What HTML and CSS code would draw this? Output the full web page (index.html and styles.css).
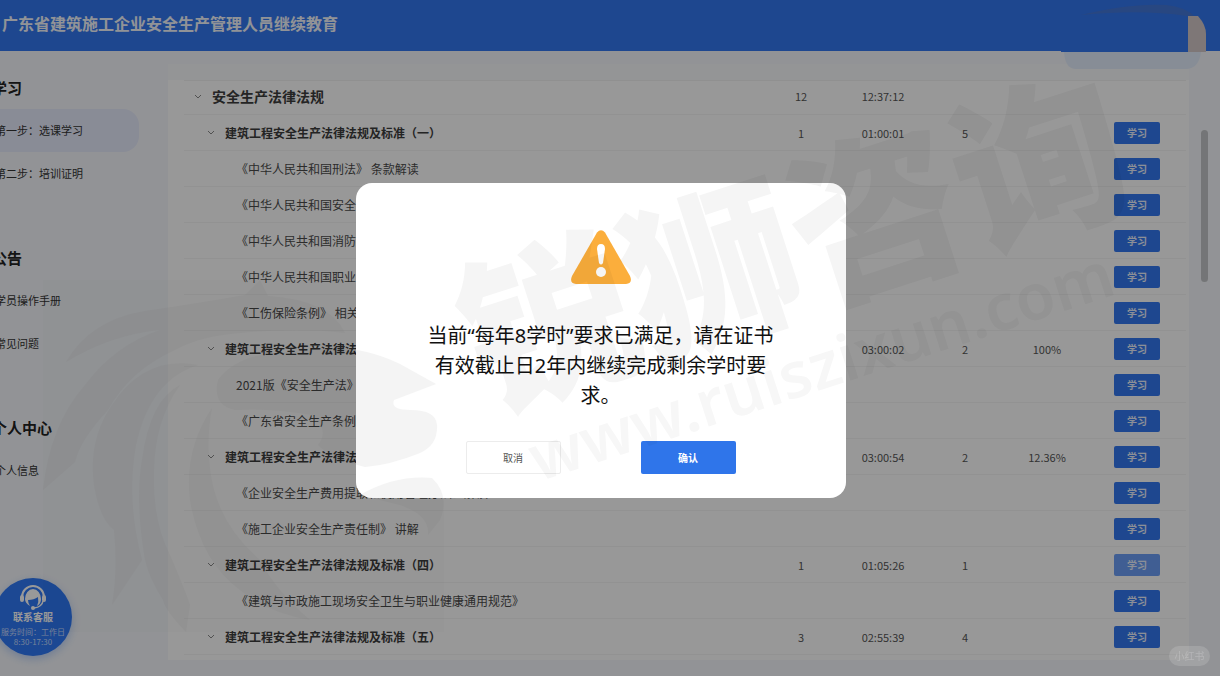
FILE: index.html
```html
<!DOCTYPE html>
<html lang="zh-CN">
<head>
    <meta charset="UTF-8">
    <meta name="viewport" content="width=device-width, initial-scale=1.0">
    <title>广东省建筑施工企业安全生产管理人员继续教育</title>
    <link rel="stylesheet" href="styles.css">
</head>
<body>
    <header class="header">
        <h1>广东省建筑施工企业安全生产管理人员继续教育</h1>
        <svg class="user-box" width="146" height="70" viewBox="0 0 146 70" aria-hidden="true">
            <path d="M20 15 Q70 3 105 5 Q125 7 134 17 L126 16 Q80 9 20 15z" fill="#5f78b5" opacity=".4"/>
            <rect x="0" y="16" width="127" height="36" fill="#3377ee"/>
            <path d="M127 16h10q8 9 8 18v18h-18z" fill="#d2c6c6"/>
            <path d="M3 52h137q-2 16-14 17H14Q4 68 3 52z" fill="#e2ebfb"/>
        </svg>
    </header>

    <div class="layout">
        <nav class="sidebar">
            <section>
                <h2>学习</h2>
                <a href="#" class="active">第一步：选课学习</a>
                <a href="#">第二步：培训证明</a>
            </section>
            <section>
                <h2>公告</h2>
                <a href="#">学员操作手册</a>
                <a href="#">常见问题</a>
            </section>
            <section>
                <h2>个人中心</h2>
                <a href="#">个人信息</a>
            </section>
        </nav>

        <main class="content">
            <table class="courses">
                <colgroup>
                    <col>
                    <col class="col-num">
                    <col class="col-num">
                    <col class="col-num">
                    <col class="col-num">
                    <col class="col-action">
                </colgroup>
                <tbody id="course-rows"></tbody>
            </table>
        </main>
        <div class="scrollbar"></div>
    </div>

    <a href="#" class="service">
        <svg width="28" height="26" viewBox="0 0 28 26" aria-hidden="true">
            <path d="M3 13a11 11 0 0 1 22 0" fill="none" stroke="#fff" stroke-width="2"/>
            <rect x="1" y="11" width="4" height="7" rx="2" fill="#fff"/>
            <rect x="23" y="11" width="4" height="7" rx="2" fill="#fff"/>
            <path d="M6 15a8 10 0 0 1 16 0q0 5-4 7 2-4 1-9-4 3-10 3 0 3 2 6-5-3-5-7z" fill="#fff"/>
            <path d="M24 17q-1 6-9 7" fill="none" stroke="#fff" stroke-width="1.5"/>
            <circle cx="14" cy="24" r="2" fill="#fff"/>
        </svg>
        <strong>联系客服</strong>
        <span>服务时间：工作日</span>
        <span>8:30-17:30</span>
    </a>

    <div class="overlay">
        <div class="dialog" role="alertdialog" aria-modal="true" aria-describedby="dialog-text">
            <svg class="warn-icon" width="60" height="54" viewBox="0 0 60 54" aria-hidden="true">
                <path d="M26 2.500Q30-2 34 2.500L59 46Q62 53 55 54H5Q-2 53 1 46z" fill="#fbae3c"/>
                <path d="M26 19q0-5 4-5t4 5l-2 14q-2 3-4 0z" fill="#fff"/>
                <circle cx="30" cy="42" r="5" fill="#fff"/>
            </svg>
            <p id="dialog-text">当前“每年8学时”要求已满足，请在证书有效截止日2年内继续完成剩余学时要求。</p>
            <div class="dialog-actions">
                <button type="button" class="btn-cancel">取消</button>
                <button type="button" class="btn-confirm">确认</button>
            </div>
        </div>
    </div>

    <svg class="watermark" viewBox="0 0 1220 676" preserveAspectRatio="xMidYMid slice" aria-hidden="true">
        <!-- lion head and mane -->
        <g class="mark mark-lion">
            <path d="M66 362Q90 320 145 311Q200 303 245 295L260 280L268 296Q330 300 345 333Q300 327 240 333Q200 336 175 350Q130 370 108 410Q80 440 75 462L43 490Q50 425 85 385Q115 345 160 330Q110 335 66 362z"/>
            <path d="M198 365Q150 380 136 445Q126 500 142 560L112 605Q118 570 114 530Q100 520 94 485Q88 440 112 405Q145 355 198 365z"/>
            <path d="M180 385Q155 420 154 470Q152 520 170 555Q185 590 190 605L186 632Q165 610 163 600Q150 580 145 560Q135 500 142 460Q150 400 180 385z"/>
            <path d="M218 380Q240 350 300 352Q350 340 400 364L436 384L394 400Q390 410 410 410Q436 410 437 425Q438 445 420 453Q390 465 365 467Q330 458 318 445Q330 430 312 415Q270 408 235 410Q212 405 218 380z"/>
            <path d="M360 495Q395 475 432 478Q450 495 440 520L428 535Q430 515 400 505Q380 500 360 495z"/>
            <path d="M212 408Q184 450 190 500Q200 560 240 590Q265 612 310 620Q275 590 260 560Q225 530 214 490Q204 450 212 408z"/>
        </g>
        <text class="mark mark-name" transform="translate(486 410) rotate(-18)">锐狮咨询</text>
        <text class="mark mark-url" transform="translate(538 482) rotate(-18)">www.ruiszixun.com</text>
    </svg>
    <div class="source-tag">小红书</div>

    <script>
        // level, name, courses, duration, hours, progress
        const courses = [
            [1, '安全生产法律法规', '12', '12:37:12', '', ''],
            [2, '建筑工程安全生产法律法规及标准（一）', '1', '01:00:01', '5', ''],
            [3, '《中华人民共和国刑法》 条款解读', '', '', '', ''],
            [3, '《中华人民共和国安全生产法》 条款解读', '', '', '', ''],
            [3, '《中华人民共和国消防法》 条款解读', '', '', '', ''],
            [3, '《中华人民共和国职业病防治法》 条款解读', '', '', '', ''],
            [3, '《工伤保险条例》 相关条款解读', '', '', '', ''],
            [2, '建筑工程安全生产法律法规及标准（二）', '2', '03:00:02', '2', '100%'],
            [3, '2021版《安全生产法》 解读', '', '', '', ''],
            [3, '《广东省安全生产条例》 解读', '', '', '', ''],
            [2, '建筑工程安全生产法律法规及标准（三）', '2', '03:00:54', '2', '12.36%'],
            [3, '《企业安全生产费用提取和使用管理办法》解读', '', '', '', ''],
            [3, '《施工企业安全生产责任制》 讲解', '', '', '', ''],
            [2, '建筑工程安全生产法律法规及标准（四）', '1', '01:05:26', '1', ''],
            [3, '《建筑与市政施工现场安全卫生与职业健康通用规范》', '', '', '', ''],
            [2, '建筑工程安全生产法律法规及标准（五）', '3', '02:55:39', '4', '']
        ];

        const chevron = `
            <button type="button" class="toggle" aria-label="收起" aria-expanded="true">
                <svg width="8" height="5" viewBox="0 0 8 5"><path d="M1 1l3 3 3-3" fill="none" stroke="#888"/></svg>
            </button>`;

        document.getElementById('course-rows').innerHTML = courses.map(([level, name, ...cells], i) => {
            const light = i === 13 ? ' light' : '';
            return `
                <tr class="level-${level}">
                    <td><div class="name">${level < 3 ? chevron : ''}${name}</div></td>
                    ${cells.map(cell => `<td class="num">${cell}</td>`).join('')}
                    <td class="num">${level > 1 ? `<button type="button" class="btn-study${light}">学习</button>` : ''}</td>
                </tr>`;
        }).join('');
    </script>
</body>
</html>
```
FILE: styles.css
```css
* {
    box-sizing: border-box;
}

body {
    font-family: "Noto Sans CJK SC", sans-serif;
    margin: 0;
    height: 100vh;
    display: flex;
    flex-direction: column;
    overflow: hidden;
    background-color: #f4f6fa;
    color: #333;
}

button {
    font-family: inherit;
    padding: 0;
    border: none;
    cursor: pointer;
}

a {
    color: inherit;
    text-decoration: none;
}

.header {
    position: relative;
    flex: none;
    height: 51px;
    padding-left: 2px;
    background-color: #3377ee;
}

.header h1 {
    margin: 0;
    font-size: 16px;
    line-height: 46px;
    color: #f2f5fc;
}

.user-box {
    position: absolute;
    top: 0;
    right: 13px;
}

.layout {
    flex: 1;
    min-height: 0;
    display: flex;
}

/* Sidebar */
.sidebar {
    flex: none;
    width: 147px;
    margin-left: -8px;
    padding-top: 15px;
}

.sidebar section {
    padding-bottom: 41px;
}

.sidebar h2 {
    margin: 0;
    font-size: 15px;
    line-height: 43px;
    color: #222;
}

.sidebar a {
    display: block;
    padding-left: 3px;
    font-size: 11px;
    line-height: 43px;
}

.sidebar a.active {
    background-color: #e5e9fa;
    border-radius: 0 16px 16px 0;
}

/* Course list */
.content {
    flex: 1;
    margin: 13px 12px 16px 29px;
    padding: 16px 3px 0 16px;
    overflow: hidden;
    background: linear-gradient(#f7f8fb 16px, #fefefe 16px);
}

.courses {
    width: 100%;
    table-layout: fixed;
    border-collapse: separate;
    border-spacing: 0;
}

.col-num {
    width: 82px;
}

.col-action {
    width: 98px;
}

.courses td {
    height: 36px;
    padding: 0;
    border-bottom: 1px solid #f4f4f4;
    font-size: 12px;
    color: #4a4a4a;
}

.courses .level-1 td {
    height: 35px;
    padding-bottom: 3px;
    border-top: 1px solid #f0f0f0;
}

.courses .num {
    text-align: center;
    font-size: 11px;
    color: #555;
}

.name {
    display: flex;
    align-items: center;
    white-space: nowrap;
}

.level-1 .name {
    padding-left: 8px;
    font-size: 14px;
    line-height: 20px;
    font-weight: bold;
    color: #3c3c3c;
}

.level-2 .name {
    padding-left: 21px;
    font-weight: bold;
    color: #3c3c3c;
}

.level-3 .name {
    padding-left: 52px;
}

.toggle {
    display: flex;
    justify-content: center;
    width: 12px;
    margin-right: 8px;
    background: none;
}

.btn-study {
    width: 46px;
    height: 22px;
    border-radius: 2px;
    background-color: #3377ee;
    color: #e8effc;
    font-size: 10px;
    font-weight: bold;
    line-height: 22px;
    vertical-align: middle;
}

.btn-study.light {
    background-color: #6b9df5;
}

.scrollbar {
    flex: none;
    width: 7px;
    height: 152px;
    margin: 79px 12px 0 0;
    border-radius: 4px;
    background-color: #c2c4c6;
}

/* Customer service bubble */
.service {
    position: absolute;
    left: -6px;
    bottom: 20px;
    width: 78px;
    height: 78px;
    padding-top: 6px;
    border-radius: 50%;
    display: flex;
    flex-direction: column;
    align-items: center;
    background-color: #2f78f5;
    box-shadow: 0 3px 8px rgba(47, 120, 245, 0.3);
    color: #fff;
    font-size: 8px;
    line-height: 10px;
    white-space: nowrap;
}

.service strong {
    margin-bottom: 3px;
    font-size: 10px;
    line-height: 14px;
}

.service span {
    color: #c3d8ff;
}

/* Dialog */
.overlay {
    position: fixed;
    inset: 0;
    display: flex;
    align-items: center;
    justify-content: center;
    padding: 4px 19px 0 0;
    background-color: rgba(0, 0, 0, 0.4);
}

.dialog {
    width: 490px;
    max-width: 90%;
    padding: 47px 24px 24px;
    border-radius: 16px;
    display: flex;
    flex-direction: column;
    align-items: center;
    background-color: #fff;
}

.dialog p {
    max-width: 348px;
    margin: 37px 0 30px;
    font-family: "Noto Sans", "Noto Sans CJK SC", sans-serif;
    font-size: 20px;
    line-height: 30px;
    text-align: center;
    color: #111;
}

.dialog-actions {
    display: flex;
    gap: 80px;
}

.dialog-actions button {
    width: 95px;
    height: 33px;
    border-radius: 2px;
    font-size: 10px;
}

.dialog-actions .btn-cancel {
    border: 1px solid #ececec;
    background-color: #fff;
    color: #555;
}

.dialog-actions .btn-confirm {
    background-color: #2f75ea;
    color: #fff;
    font-weight: bold;
}

/* Watermark above everything */
.watermark {
    position: fixed;
    inset: 0;
    width: 100%;
    height: 100%;
    pointer-events: none;
}

.mark {
    fill: #000;
    opacity: 0.04;
}

.mark-name {
    font-size: 172px;
    font-weight: 900;
}

.mark-url {
    font-family: "Noto Sans", sans-serif;
    font-size: 64px;
    font-weight: 600;
    opacity: 0.03;
}

.source-tag {
    position: fixed;
    right: 10px;
    bottom: 10px;
    width: 41px;
    border-radius: 10px;
    background-color: rgba(255, 255, 255, 0.14);
    color: rgba(255, 255, 255, 0.2);
    font-size: 10px;
    line-height: 20px;
    text-align: center;
}
```
